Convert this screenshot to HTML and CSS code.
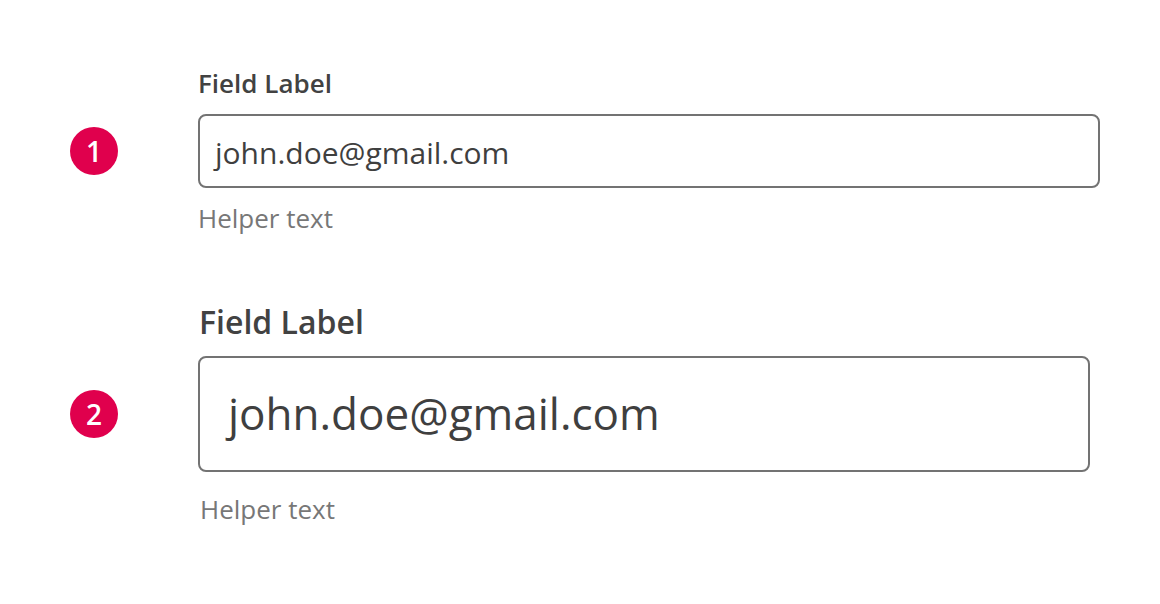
FILE: index.html
```html
<!DOCTYPE html>
<html lang="en">
<head>
<meta charset="utf-8">
<title>Text fields</title>
<link rel="stylesheet" href="styles.css">
</head>
<body>
<main class="page">
  <section class="field field--default">
    <div class="badge">1</div>
    <div class="field__label">Field Label</div>
    <div class="field__box"><span class="field__value">john.doe@gmail.com</span></div>
    <div class="field__helper">Helper text</div>
  </section>
  <section class="field field--large">
    <div class="badge">2</div>
    <div class="field__label">Field Label</div>
    <div class="field__box"><span class="field__value">john.doe@gmail.com</span></div>
    <div class="field__helper">Helper text</div>
  </section>
</main>
</body>
</html>
```

FILE: styles.css
```css
html, body {
  margin: 0;
  padding: 0;
  background: #ffffff;
}

body {
  font-family: "Open Sans", "Noto Sans", sans-serif;
  color: #424242;
}

.page {
  padding: 65px 0 0 70px;
}

.field {
  display: grid;
  grid-template-columns: 48px auto;
  grid-template-rows: auto auto auto;
  column-gap: 80px;
  justify-content: start;
}

.badge {
  grid-column: 1;
  grid-row: 2;
  align-self: center;
  width: 48px;
  height: 48px;
  border-radius: 50%;
  background: #e0004d;
  color: #ffffff;
  font-weight: 600;
  font-size: 28px;
  line-height: 48px;
  text-align: center;
}

.field__label {
  grid-column: 2;
  grid-row: 1;
  font-weight: 600;
  color: #424242;
}

.field__box {
  grid-column: 2;
  grid-row: 2;
  box-sizing: border-box;
  border: 2px solid #737373;
  border-radius: 8px;
  background: #ffffff;
}

.field__value {
  display: block;
  color: #3f3f3f;
  white-space: nowrap;
}

.field__helper {
  grid-column: 2;
  grid-row: 3;
  font-size: 26px;
  line-height: 36px;
  color: #777777;
}

/* default size */
.field--default .field__label {
  font-size: 26px;
  line-height: 36px;
  margin-bottom: 13px;
}

.field--default .field__box {
  width: 902px;
  height: 74px;
  padding: 17px 15px 0;
}

.field--default .field__value {
  font-size: 30px;
  line-height: 40px;
}

.field--default .field__helper {
  margin-top: 12px;
}

/* large size */
.field--large {
  margin-top: 64px;
}

.field--large .field__label {
  font-size: 32px;
  line-height: 44px;
  margin-bottom: 12px;
  padding-left: 1px;
}

.field--large .field__box {
  width: 892px;
  height: 116px;
  padding: 27px 28px 0;
}

.field--large .field__value {
  font-size: 44px;
  line-height: 56px;
}

.field--large .field__helper {
  margin-top: 19px;
  padding-left: 2px;
}
```
